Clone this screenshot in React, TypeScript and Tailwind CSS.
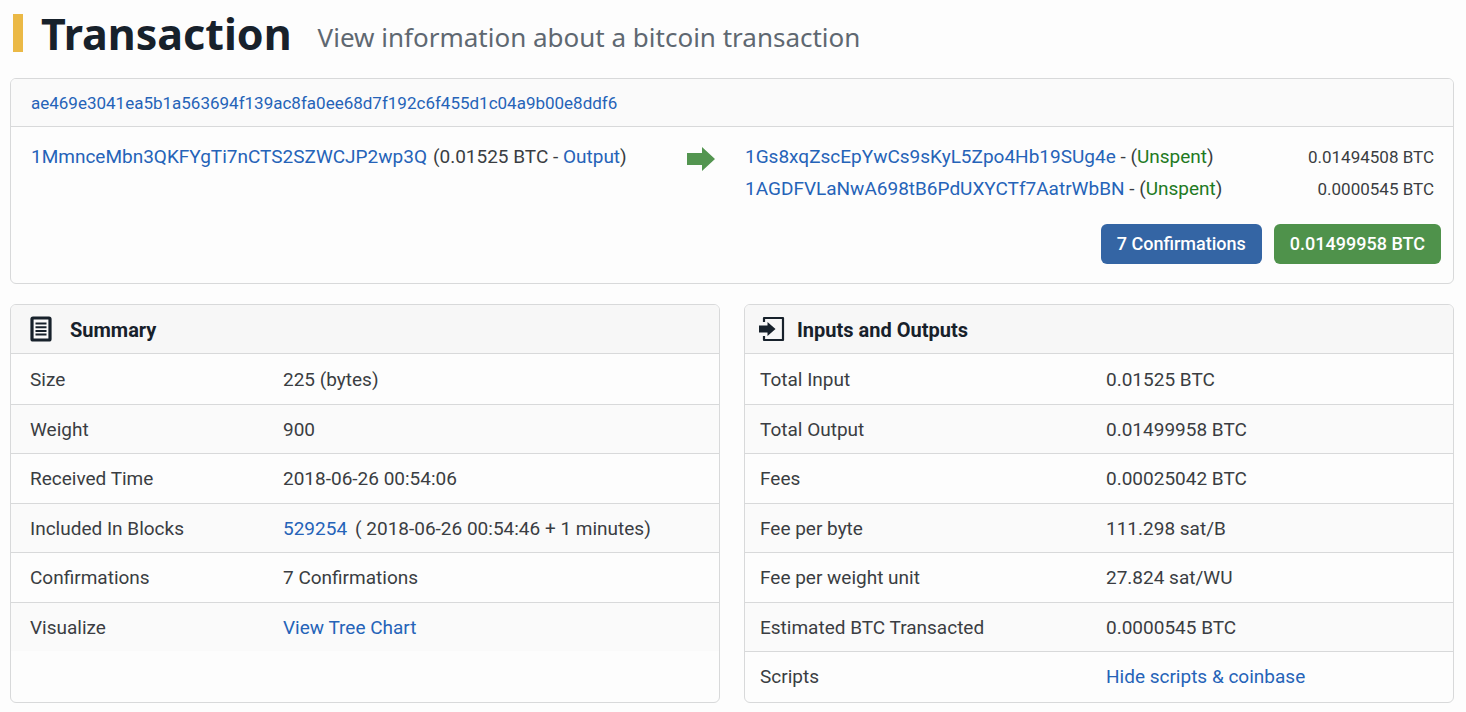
import type { ReactNode } from 'react';

const summaryRows: { label: string; value: ReactNode }[] = [
  { label: 'Size', value: '225 (bytes)' },
  { label: 'Weight', value: '900' },
  { label: 'Received Time', value: '2018-06-26 00:54:06' },
  {
    label: 'Included In Blocks',
    value: (
      <>
        <TextLink>529254</TextLink>
        <span className="ml-2">( 2018-06-26 00:54:46 + 1 minutes)</span>
      </>
    ),
  },
  { label: 'Confirmations', value: '7 Confirmations' },
  { label: 'Visualize', value: <TextLink>View Tree Chart</TextLink> },
];

const ioRows: { label: string; value: ReactNode }[] = [
  { label: 'Total Input', value: '0.01525 BTC' },
  { label: 'Total Output', value: '0.01499958 BTC' },
  { label: 'Fees', value: '0.00025042 BTC' },
  { label: 'Fee per byte', value: '111.298 sat/B' },
  { label: 'Fee per weight unit', value: '27.824 sat/WU' },
  { label: 'Estimated BTC Transacted', value: '0.0000545 BTC' },
  { label: 'Scripts', value: <TextLink>Hide scripts &amp; coinbase</TextLink> },
];

const outputs = [
  { address: '1Gs8xqZscEpYwCs9sKyL5Zpo4Hb19SUg4e', amount: '0.01494508 BTC' },
  { address: '1AGDFVLaNwA698tB6PdUXYCTf7AatrWbBN', amount: '0.0000545 BTC' },
];

function TextLink({ children }: { children: ReactNode }) {
  return (
    <a href="#" className="text-[#2563b8] hover:underline">
      {children}
    </a>
  );
}

function SummaryIcon() {
  return (
    <svg width="22" height="26" viewBox="0 0 22 26" className="shrink-0" aria-hidden="true">
      <rect x="2" y="2" width="18" height="22" rx="1" fill="#fafafa" stroke="#17212b" strokeWidth="3.2" />
      <path d="M5.500 7.500h11M5.500 11.200h11M5.500 14.900h11M5.500 18.600h11" stroke="#17212b" strokeWidth="2" />
    </svg>
  );
}

function InputIcon() {
  return (
    <svg width="26" height="26" viewBox="0 0 26 26" className="shrink-0" aria-hidden="true">
      <path d="M5 6V2h19v22H5v-4" fill="none" stroke="#17212b" strokeWidth="2.2" strokeLinejoin="round" />
      <path d="M0 9.500h8.500V6l8 7-8 7v-3.500H0z" fill="#17212b" />
    </svg>
  );
}

function Panel({
  title,
  icon,
  rows,
  headClass,
  labelClass,
}: {
  title: string;
  icon: ReactNode;
  rows: { label: string; value: ReactNode }[];
  headClass: string;
  labelClass: string;
}) {
  return (
    <section className="overflow-hidden rounded-md border border-[#d8d9da] pb-px">
      <header className={`flex h-[49px] items-center border-b border-[#d8d9da] bg-[#f7f7f7] ${headClass}`}>
        {icon}
        <h2 className="pt-0.5 text-[20px] font-bold text-[#17212b]">{title}</h2>
      </header>
      <table className="w-full border-collapse">
        <tbody>
          {rows.map((row) => (
            <tr
              key={row.label}
              className="border-b border-[#d8d9da] last:border-b-0 odd:h-[50px] even:h-[49px] even:bg-[#fafafa]"
            >
              <th scope="row" className={`text-left font-normal ${labelClass}`}>
                {row.label}
              </th>
              <td className="pt-0.5">{row.value}</td>
            </tr>
          ))}
        </tbody>
      </table>
    </section>
  );
}

export default function App() {
  return (
    <main className="min-h-screen bg-[#fdfdfd] pt-2.5 pr-3 pb-2 pl-[10px] font-[Roboto,sans-serif] text-[19px] leading-6 text-[#3a3d42]">
      <div className="flex h-[46px] items-center">
        <span className="ml-[3px] h-[38px] w-[10px] bg-[#ebb946]" />
        <h1 className="ml-[18px] pt-0.5 font-['Noto_Sans',sans-serif] text-[43px] leading-[46px] font-bold text-[#17212b]">
          Transaction
        </h1>
        <p className="ml-[26px] pt-2 font-['Noto_Sans',sans-serif] text-[26px] text-[#5f6871]">
          View information about a bitcoin transaction
        </p>
      </div>

      <section className="mt-[22px] overflow-hidden rounded-md border border-[#d8d9da]">
        <header className="flex h-12 items-center border-b border-[#d8d9da] bg-[#fafafa] px-5 text-[17px]">
          <TextLink>ae469e3041ea5b1a563694f139ac8fa0ee68d7f192c6f455d1c04a9b00e8ddf6</TextLink>
        </header>
        <div className="flex pt-[14px] pr-3 pb-[19px] pl-5">
          <div className="w-[656px] py-1">
            <TextLink>1MmnceMbn3QKFYgTi7nCTS2SZWCJP2wp3Q</TextLink>
            <span className="ml-1.5">
              (0.01525 BTC - <TextLink>Output</TextLink>)
            </span>
          </div>
          <svg width="28" height="26" viewBox="0 0 28 26" className="mt-[5px] shrink-0" aria-hidden="true">
            <path d="M0 7h15V1l13 12-13 12v-6H0z" fill="#539550" />
          </svg>
          <div className="ml-[30px] flex-1">
            {outputs.map((output) => (
              <div key={output.address} className="flex h-8 items-center justify-between pr-[7px]">
                <div>
                  <TextLink>{output.address}</TextLink> - (<span className="text-[#1f7a1f]">Unspent</span>)
                </div>
                <span className="text-[17px]">{output.amount}</span>
              </div>
            ))}
            <div className="mt-[19px] flex justify-end gap-3 text-[18px] font-medium text-white">
              <button type="button" className="h-10 rounded-md bg-[#3465a4] px-4">
                7 Confirmations
              </button>
              <button type="button" className="h-10 rounded-md bg-[#4f924b] px-4">
                0.01499958 BTC
              </button>
            </div>
          </div>
        </div>
      </section>

      <div className="mt-5 grid grid-cols-2 gap-6">
        <Panel
          title="Summary"
          icon={<SummaryIcon />}
          rows={summaryRows}
          headClass="pl-[19px] gap-[18px]"
          labelClass="w-[272px] pl-[19px] pt-0.5"
        />
        <Panel
          title="Inputs and Outputs"
          icon={<InputIcon />}
          rows={ioRows}
          headClass="pl-[14px] gap-3"
          labelClass="w-[361px] pl-[15px] pt-0.5"
        />
      </div>
    </main>
  );
}
